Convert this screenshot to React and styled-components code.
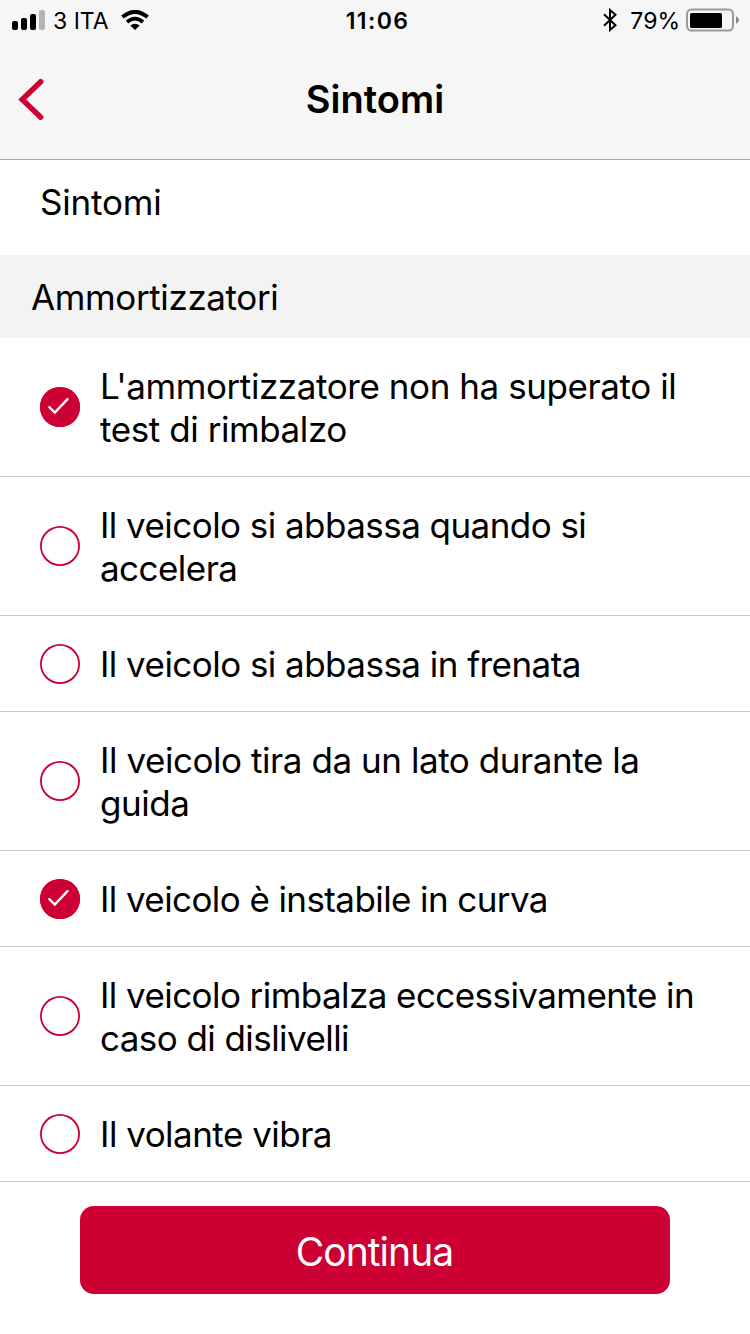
import { useState } from "react"
import styled, { createGlobalStyle } from "styled-components"

const symptoms = [
  { id: 1, text: "L'ammortizzatore non ha superato il test di rimbalzo", tracking: -0.42, checked: true },
  { id: 2, text: "Il veicolo si abbassa quando si accelera", tracking: -0.55, checked: false },
  { id: 3, text: "Il veicolo si abbassa in frenata", tracking: -0.54, checked: false },
  { id: 4, text: "Il veicolo tira da un lato durante la guida", tracking: -0.44, checked: false },
  { id: 5, text: "Il veicolo è instabile in curva", tracking: -0.59, checked: true },
  { id: 6, text: "Il veicolo rimbalza eccessivamente in caso di dislivelli", tracking: -0.57, checked: false },
  { id: 7, text: "Il volante vibra", tracking: -0.52, checked: false },
]

function App() {
  const [items, setItems] = useState(symptoms)

  const toggle = (id) => {
    setItems(items.map((item) => (item.id === id ? { ...item, checked: !item.checked } : item)))
  }

  return (
    <Screen>
      <GlobalStyle />
      <Header>
        <StatusBar>
          <StatusLeft>
            <SignalIcon />
            <Carrier>3 ITA</Carrier>
            <WifiIcon />
          </StatusLeft>
          <Clock>11:06</Clock>
          <StatusRight>
            <BluetoothIcon />
            <Percent>79%</Percent>
            <BatteryIcon />
          </StatusRight>
        </StatusBar>
        <NavBar>
          <BackButton aria-label="Indietro">
            <svg width="26" height="42" viewBox="0 0 26 42">
              <path d="M22.7 2.7L4.2 20.5L22.7 38.2" fill="none" stroke="#cc0033" strokeWidth="5.4" strokeLinecap="round" />
            </svg>
          </BackButton>
          <Title>Sintomi</Title>
          <span />
        </NavBar>
      </Header>
      <Intro>Sintomi</Intro>
      <SectionTitle>Ammortizzatori</SectionTitle>
      <List>
        {items.map((item) => (
          <Row key={item.id} onClick={() => toggle(item.id)}>
            <Radio $checked={item.checked}>
              {item.checked && (
                <svg width="40" height="40" viewBox="0 0 40 40">
                  <path d="M9.3 20.2L14.8 25.5L27.5 12.2" fill="none" stroke="#fff" strokeWidth="2.4" strokeLinecap="round" />
                </svg>
              )}
            </Radio>
            <Label $tracking={item.tracking}>{item.text}</Label>
          </Row>
        ))}
      </List>
      <Footer>
        <ContinueButton>Continua</ContinueButton>
      </Footer>
    </Screen>
  )
}

const SignalIcon = () => (
  <svg width="33" height="20" viewBox="0 0 33 20">
    <rect x="0" y="11" width="6" height="9" rx="2" />
    <rect x="9" y="8" width="6" height="12" rx="2" />
    <rect x="18" y="4" width="6" height="16" rx="2" />
    <rect x="27" y="0" width="6" height="20" rx="2" fill="#b5b5b5" />
  </svg>
)

const WifiIcon = () => (
  <svg width="28" height="20" viewBox="0 0 28 20">
    <path d="M1.4 7.1Q14 -3.3 26.6 7.1" fill="none" stroke="#000" strokeWidth="3.9" />
    <path d="M6 12Q14 5.2 22 12" fill="none" stroke="#000" strokeWidth="3.8" />
    <path d="M9.3 15.6Q14 12 18.7 15.6L14 20Z" />
  </svg>
)

const BluetoothIcon = () => (
  <svg width="14" height="24" viewBox="0 0 14 24">
    <path d="M1 6.2L12.5 17.2L7 22V2L12.5 6.8L1 17.8" fill="none" stroke="#000" strokeWidth="2" />
  </svg>
)

const BatteryIcon = () => (
  <svg width="54" height="24" viewBox="0 0 54 24">
    <rect x="1" y="1.5" width="46" height="21" rx="4.5" fill="none" stroke="#999" strokeWidth="2" />
    <rect x="4" y="5" width="32" height="15" rx="1.5" />
    <path d="M50 8.5Q53 9.5 53 12Q53 14.5 50 16Z" fill="#888" />
  </svg>
)

const GlobalStyle = createGlobalStyle`
body{
  margin:0;
  background:#fff;
  font-family:Inter, "Liberation Sans", sans-serif;
  color:#000;
}
*{
  box-sizing:border-box;
}
`
const Screen = styled.main`
width:750px;
height:1334px;
overflow:hidden;
display:flex;
flex-direction:column;
background-color:#fff;
`
const Header = styled.header`
height:160px;
flex-shrink:0;
background-color:#f6f6f6;
border-bottom:1px solid #a9a9a9;
`
const StatusBar = styled.div`
display:grid;
grid-template-columns:1fr auto 1fr;
align-items:center;
height:40px;
padding:0 10px 0 12px;
font-size:23px;
line-height:40px;
`
const StatusLeft = styled.div`
display:flex;
align-items:center;
`
const StatusRight = styled.div`
display:flex;
align-items:center;
justify-content:flex-end;
`
const Carrier = styled.span`
margin:1px 12px -1px 8px;
`
const Clock = styled.span`
margin:1px 0 -1px 3px;
font-weight:600;
letter-spacing:1.4px;
`
const Percent = styled.span`
margin:1px 6px -1px 13px;
`
const NavBar = styled.nav`
display:grid;
grid-template-columns:1fr auto 1fr;
align-items:center;
height:119px;
`
const BackButton = styled.button`
display:flex;
width:60px;
padding:0 0 0 18px;
border:none;
background:none;
`
const Title = styled.h1`
margin:-1px 0 1px;
font-size:38px;
font-weight:600;
line-height:44px;
`
const Intro = styled.p`
height:95px;
margin:0;
padding:21px 40px;
font-size:35px;
line-height:43px;
letter-spacing:-0.2px;
`
const SectionTitle = styled.h2`
height:83px;
margin:0;
padding:21px 31px;
background-color:#f3f3f3;
font-size:35px;
font-weight:400;
line-height:43px;
letter-spacing:-0.38px;
`
const List = styled.ul`
margin:0;
padding:0;
list-style:none;
`
const Row = styled.li`
display:flex;
align-items:center;
gap:20px;
padding:26px 20px 26px 40px;
border-bottom:1px solid #c8c8c8;
`
const Radio = styled.span`
flex-shrink:0;
display:flex;
width:40px;
height:40px;
border-radius:50%;
background-color:${({ $checked }) => ($checked ? "#cc0033" : "#fff")};
box-shadow:inset 0 0 0 1.8px #cc0033;
`
const Label = styled.span`
margin:1px 0 -1px;
font-size:35px;
line-height:43px;
letter-spacing:${({ $tracking }) => $tracking}px;
`
const Footer = styled.footer`
padding:24px 80px 0;
`
const ContinueButton = styled.button`
display:block;
width:100%;
height:88px;
padding:2px 1px 0 0;
border:none;
border-radius:14px;
background-color:#cc0033;
color:#fff;
font-family:inherit;
font-size:39px;
letter-spacing:-0.95px;
`

export default App
